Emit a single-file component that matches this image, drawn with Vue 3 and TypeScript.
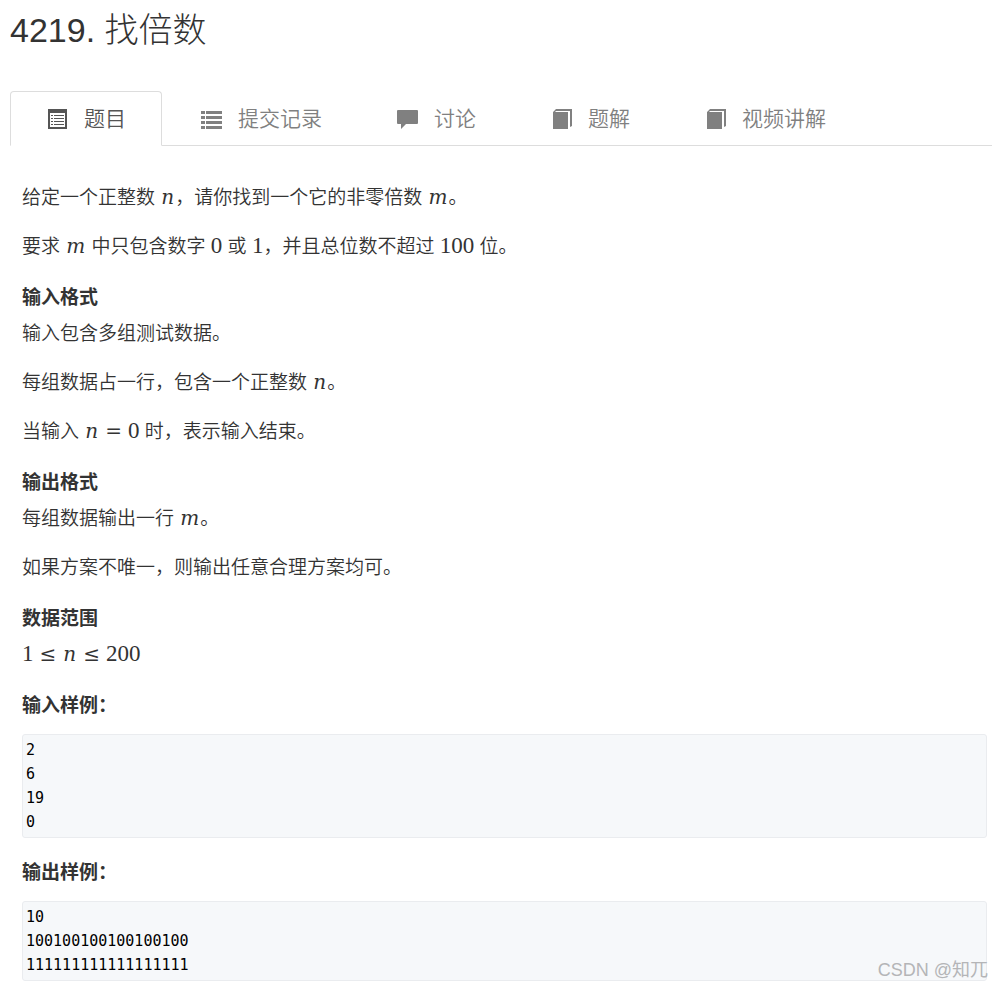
<script setup lang="ts">
import { ref } from 'vue'

type IconName = 'list-alt' | 'list' | 'comment' | 'book'
interface Tab { id: string; label: string; icon: IconName }
interface Piece { text: string; kind?: 'var' | 'num' | 'rel' }
interface Section { title: string; paragraphs: Piece[][] }

const tabs: Tab[] = [
  { id: 'problem', label: '题目', icon: 'list-alt' },
  { id: 'submissions', label: '提交记录', icon: 'list' },
  { id: 'discussion', label: '讨论', icon: 'comment' },
  { id: 'solutions', label: '题解', icon: 'book' },
  { id: 'video', label: '视频讲解', icon: 'book' },
]
const active = ref('problem')

const t = (text: string): Piece => ({ text })
const v = (text: string): Piece => ({ text, kind: 'var' })
const n = (text: string): Piece => ({ text, kind: 'num' })
const r = (text: string): Piece => ({ text, kind: 'rel' })

const sections: Section[] = [
  {
    title: '',
    paragraphs: [
      [t('给定一个正整数 '), v('n'), t('，请你找到一个它的非零倍数 '), v('m'), t('。')],
      [t('要求 '), v('m'), t(' 中只包含数字 '), n('0'), t(' 或 '), n('1'), t('，并且总位数不超过 '), n('100'), t(' 位。')],
    ],
  },
  {
    title: '输入格式',
    paragraphs: [
      [t('输入包含多组测试数据。')],
      [t('每组数据占一行，包含一个正整数 '), v('n'), t('。')],
      [t('当输入 '), v('n'), r('='), n('0'), t(' 时，表示输入结束。')],
    ],
  },
  {
    title: '输出格式',
    paragraphs: [
      [t('每组数据输出一行 '), v('m'), t('。')],
      [t('如果方案不唯一，则输出任意合理方案均可。')],
    ],
  },
  {
    title: '数据范围',
    paragraphs: [[n('1'), r('≤'), v('n'), r('≤'), n('200')]],
  },
]

const samples = [
  { title: '输入样例：', code: '2\n6\n19\n0' },
  { title: '输出样例：', code: '10\n100100100100100100\n111111111111111111' },
]
</script>

<template>
  <main class="page" lang="zh-CN">
    <h1 class="title">4219. 找倍数</h1>

    <nav class="tabs">
      <a
        v-for="tab in tabs"
        :key="tab.id"
        :href="'#' + tab.id"
        class="tab"
        :class="{ active: active === tab.id }"
        @click.prevent="active = tab.id"
      >
        <svg class="icon" viewBox="0 0 21 21" aria-hidden="true">
          <template v-if="tab.icon === 'list-alt'">
            <path fill-rule="evenodd" d="M1 1h19v20H1zM3 5v14h15V5z" />
            <path d="M4 7h2v1H4zM7 7h10v1H7zM4 10h2v1H4zM7 10h10v1H7zM4 13h2v1H4zM7 13h10v1H7zM4 16h2v1H4zM7 16h10v1H7z" />
          </template>
          <template v-else-if="tab.icon === 'list'">
            <path d="M0 3h4v3H0zM5 3h16v3H5zM0 8h4v3H0zM5 8h16v3H5zM0 13h4v3H0zM5 13h16v3H5zM0 18h4v3H0zM5 18h16v3H5z" />
          </template>
          <path v-else-if="tab.icon === 'comment'" d="M1 2h19q1 0 1 1v12q0 1-1 1H9l-5 5v-5H1q-1 0-1-1V3q0-1 1-1z" />
          <template v-else>
            <path d="M2 4h15v17H2z" />
            <path d="M2 4 5 1h16v17l-2 1V3H5L3 5z" />
          </template>
        </svg>
        <span>{{ tab.label }}</span>
      </a>
    </nav>

    <article class="content">
      <section v-for="(section, i) in sections" :key="i">
        <h2 v-if="section.title">{{ section.title }}</h2>
        <p v-for="(paragraph, j) in section.paragraphs" :key="j"><span
          v-for="(piece, k) in paragraph" :key="k" :class="piece.kind">{{ piece.text }}</span></p>
      </section>
      <section v-for="sample in samples" :key="sample.title">
        <h2>{{ sample.title }}</h2>
        <pre><code>{{ sample.code }}</code></pre>
      </section>
    </article>

    <div class="watermark">CSDN @知兀</div>
  </main>
</template>

<style>
body {
  margin: 0;
  background: #fff;
}
</style>

<style scoped>
.page {
  position: relative;
  padding-left: 10px;
  padding-bottom: 6px;
  color: #333;
  font-family: "Liberation Sans", "Noto Sans CJK SC", sans-serif;
  font-size: 19px;
  line-height: 29px;
}
.title {
  margin: 0;
  padding: 10px 0 41px;
  font-size: 34px;
  font-weight: 300;
  line-height: 40px;
}
.tabs {
  display: flex;
  gap: 2px;
  border-bottom: 1px solid #ddd;
}
.tab {
  display: flex;
  align-items: center;
  gap: 16px;
  height: 53px;
  padding: 0 35px 0 36px;
  margin-bottom: -1px;
  border: 1px solid transparent;
  border-radius: 4px 4px 0 0;
  color: #808080;
  font-size: 21px;
  font-weight: 350;
  text-decoration: none;
}
.tab.active {
  border-color: #ddd;
  border-bottom-color: #fff;
  background: #fff;
  color: #555;
}
.icon {
  width: 21px;
  height: 21px;
  fill: currentColor;
}
.content {
  padding: 37px 5px 0 12px;
}
h2 {
  margin: 0;
  padding: 2px 0 7px;
  font-size: 19px;
  font-weight: 700;
  line-height: 29px;
}
p {
  height: 29px;
  margin: 0 0 20px;
  font-weight: 350;
  white-space: pre-wrap;
}
.num {
  font-family: "Liberation Serif", serif;
  font-size: 23px;
  line-height: 20px;
}
.var,
.rel {
  font-family: "DejaVu Serif", serif;
  font-size: 20px;
  line-height: 20px;
}
.var {
  padding: 0 1px;
  font-style: italic;
}
.rel {
  padding: 0 6px;
}
pre {
  margin: 7px 0 18px;
  padding: 3px;
  border: 1px solid #eaecef;
  border-radius: 3px;
  background: #f6f8fa;
  color: #000;
  font-family: "DejaVu Sans Mono", monospace;
  font-size: 15px;
  line-height: 24px;
}
section:last-child pre {
  margin-bottom: 0;
}
code {
  display: block;
  font: inherit;
}
.watermark {
  position: absolute;
  right: 4px;
  bottom: 2px;
  color: #b4b5b7;
  font-size: 18px;
  line-height: 30px;
  white-space: nowrap;
}
</style>
